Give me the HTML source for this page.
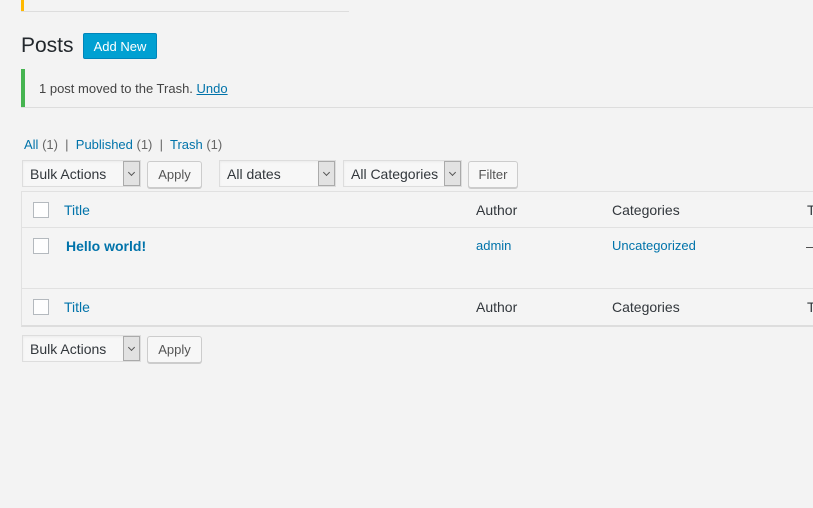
<!DOCTYPE html>
<html><head><meta charset="utf-8">
<style>
*{box-sizing:border-box;margin:0;padding:0}
html,body{width:813px;height:508px;overflow:hidden;background:#f3f3f3;font-family:"Liberation Sans",sans-serif;font-size:13px;color:#444}
.a{position:absolute}
.sel{position:absolute;height:27px;border:1px solid #ddd;background:#f7f7f7;box-shadow:inset 0 1px 2px rgba(0,0,0,.05);font-size:14px;color:#32373c;padding:5px 0 0 7px;white-space:nowrap}
.sel .ar{position:absolute;right:0;top:0;width:17px;height:25px;background:#e2e2e2;border:1px solid #aaa}
.sel .ar:after{content:"";position:absolute;left:5px;top:8px;width:4px;height:4px;border-right:1px solid #555;border-bottom:1px solid #555;transform:rotate(45deg)}
.btn{position:absolute;height:27px;border:1px solid #ccc;border-radius:3px;background:#f7f7f7;box-shadow:0 1px 0 #ccc;font-size:13px;color:#555;text-align:center;padding-top:5px}
.cb{position:absolute;width:16px;height:16px;border:1px solid #b4b9be;background:#fefefe}
.lk{color:#0073aa}
.th{position:absolute;font-size:14px}
</style></head><body>
<div class="a" style="left:21px;top:0;width:3px;height:11px;background:#ffb900"></div>
<div class="a" style="left:21px;top:11px;width:328px;height:1px;background:#ddd"></div>
<div class="a" style="left:21px;top:34px;font-size:21px;color:#23282d">Posts</div>
<div class="a" style="left:83px;top:33px;width:74px;height:26px;background:#00a0d2;border:1px solid #0085ba;border-radius:2px;color:#fff;font-size:13px;text-align:center;padding-top:5px">Add New</div>
<div class="a" style="left:21px;top:69px;width:4px;height:39px;background:#46b450"></div>
<div class="a" style="left:21px;top:107px;width:792px;height:1px;background:#ddd"></div>
<div class="a" style="left:39px;top:81px;font-size:13px;color:#444">1 post moved to the Trash. <span class="lk" style="text-decoration:underline">Undo</span></div>
<div class="a" style="left:24px;top:137px;font-size:13px;color:#666"><span class="lk">All</span> (1) &nbsp;|&nbsp; <span class="lk">Published</span> (1) &nbsp;|&nbsp; <span class="lk">Trash</span> (1)</div>

<div class="sel" style="left:22px;top:160px;width:119px">Bulk Actions<div class="ar"></div></div>
<div class="btn" style="left:147px;top:161px;width:55px">Apply</div>
<div class="sel" style="left:219px;top:160px;width:117px">All dates<div class="ar"></div></div>
<div class="sel" style="left:343px;top:160px;width:119px">All Categories<div class="ar"></div></div>
<div class="btn" style="left:468px;top:161px;width:50px">Filter</div>

<div class="a" style="left:21px;top:191px;width:800px;height:136px;border:1px solid #e1e1e1;border-bottom:2px solid #ddd;background:#f4f4f4"></div>
<div class="a" style="left:21px;top:227px;width:792px;height:1px;background:#e1e1e1"></div>
<div class="a" style="left:21px;top:288px;width:792px;height:1px;background:#e1e1e1"></div>

<div class="cb" style="left:33px;top:202px"></div>
<div class="th lk" style="left:64px;top:202px">Title</div>
<div class="th" style="left:476px;top:202px;color:#32373c">Author</div>
<div class="th" style="left:612px;top:202px;color:#32373c">Categories</div>
<div class="th" style="left:807px;top:202px;color:#32373c">T</div>

<div class="cb" style="left:33px;top:238px"></div>
<div class="th lk" style="left:66px;top:238px;font-weight:bold">Hello world!</div>
<div class="th lk" style="left:476px;top:238px;font-size:13px">admin</div>
<div class="th lk" style="left:612px;top:238px;font-size:13px">Uncategorized</div>
<div class="th" style="left:806px;top:238px">–</div>

<div class="cb" style="left:33px;top:299px"></div>
<div class="th lk" style="left:64px;top:299px">Title</div>
<div class="th" style="left:476px;top:299px;color:#32373c">Author</div>
<div class="th" style="left:612px;top:299px;color:#32373c">Categories</div>
<div class="th" style="left:807px;top:299px;color:#32373c">T</div>

<div class="sel" style="left:22px;top:335px;width:119px">Bulk Actions<div class="ar"></div></div>
<div class="btn" style="left:147px;top:336px;width:55px">Apply</div>
</body></html>
